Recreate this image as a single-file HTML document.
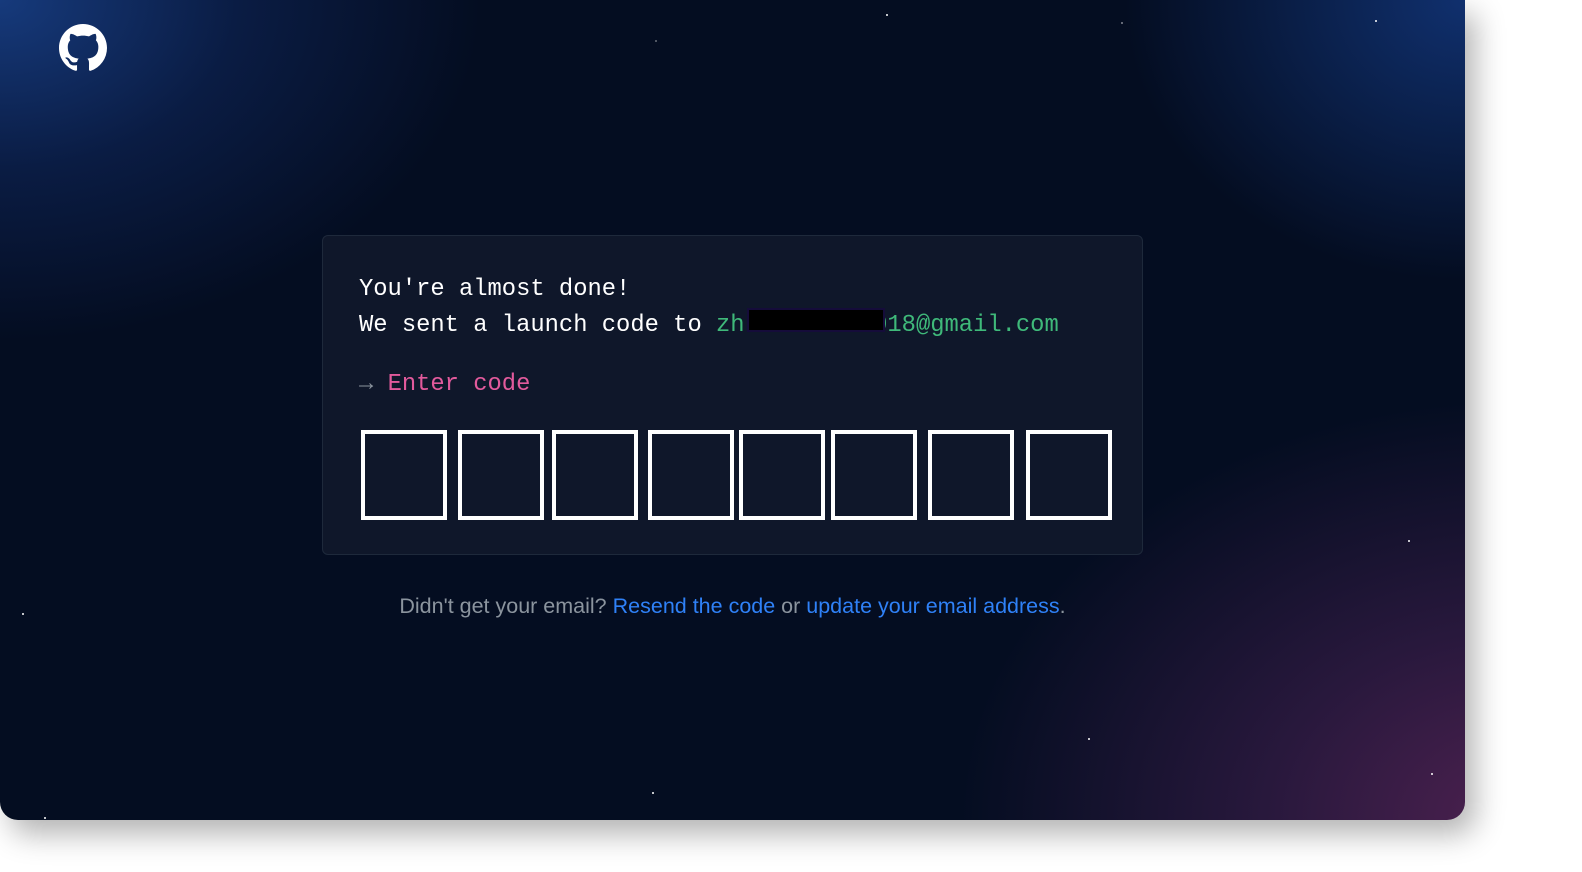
<!DOCTYPE html>
<html><head><style>
*{margin:0;padding:0;box-sizing:border-box}
body{width:1582px;height:872px;background:#fff;position:relative;overflow:hidden;font-family:"Liberation Sans",sans-serif}
.win{position:absolute;left:0;top:0;width:1465px;height:820px;border-radius:0 0 18px 18px;overflow:hidden;
background:
radial-gradient(ellipse 560px 420px at 1520px 820px,#4d2150 0%,rgba(60,30,75,.65) 45%,rgba(4,13,33,0) 100%),
radial-gradient(ellipse 480px 340px at 0px 0px,#163a7c 0%,rgba(15,40,95,.55) 50%,rgba(4,13,33,0) 100%),
radial-gradient(ellipse 340px 280px at 1465px 0px,#10306e 0%,rgba(4,13,33,0) 100%),
#040d21;
box-shadow:10px 14px 30px rgba(0,0,0,.3)}
.star{position:absolute;width:2px;height:2px;background:#fff;border-radius:1px}
.card{position:absolute;left:322px;top:235px;width:821px;height:320px;background:#0f172a;border:1px solid #1e293b;border-radius:6px}
.mono{font-family:"Liberation Mono",monospace;font-size:23.8px;position:absolute;left:36px;white-space:pre;color:#fff}
.box{position:absolute;top:194px;width:86px;height:90px;border:4px solid #fff}
.foot{position:absolute;top:594px;left:0;width:1465px;text-align:center;color:#8b949e;font-size:21.5px}
.foot a{color:#2f81f7;text-decoration:none}
</style></head><body>
<div class="win">
<svg style="position:absolute;left:59px;top:24px" width="48" height="48" viewBox="0 0 16 16"><path fill="#fff" d="M8 0C3.580 0 0 3.580 0 8c0 3.54 2.29 6.53 5.47 7.59.4.07.55-.17.55-.38 0-.19-.01-.82-.01-1.49-2.01.37-2.53-.49-2.69-.94-.09-.23-.48-.94-.82-1.13-.28-.15-.68-.52-.01-.53.63-.01 1.08.58 1.23.82.72 1.21 1.87.87 2.33.66.07-.52.28-.87.51-1.070-1.780-.2-3.640-.89-3.640-3.95 0-.87.31-1.59.82-2.15-.08-.2-.36-1.02.08-2.12 0 0 .67-.21 2.2.82.64-.18 1.32-.27 2-.27.68 0 1.36.09 2 .27 1.53-1.04 2.2-.82 2.2-.82.44 1.1.16 1.92.08 2.12.51.56.82 1.27.82 2.15 0 3.07-1.87 3.75-3.65 3.95.29.25.54.73.54 1.48 0 1.07-.01 1.93-.01 2.2 0 .21.15.46.55.38A8.013 8.013 0 0016 8c0-4.42-3.58-8-8-8z"/></svg>
<div class="star" style="left:886px;top:14px"></div>
<div class="star" style="left:1121px;top:22px;opacity:.5"></div>
<div class="star" style="left:1375px;top:20px"></div>
<div class="star" style="left:655px;top:40px;opacity:.4"></div>
<div class="star" style="left:1408px;top:540px"></div>
<div class="star" style="left:22px;top:613px"></div>
<div class="star" style="left:1088px;top:738px"></div>
<div class="star" style="left:1431px;top:773px"></div>
<div class="star" style="left:652px;top:792px"></div>
<div class="star" style="left:44px;top:817px"></div>
<div class="card">
<div class="mono" style="top:40px">You're almost done!</div>
<div class="mono" style="top:76px">We sent a launch code to <span style="color:#3fb97a">zh        2018@gmail.com</span></div>
<div style="position:absolute;left:424px;top:72px;width:138px;height:24px;background:#000;border:2px solid #150c3a"></div>
<div class="mono" style="top:135px"><span style="color:#8b949e">→</span> <span style="color:#e25a9c">Enter code</span></div>
<div class="box" style="left:38px"></div>
<div class="box" style="left:135px"></div>
<div class="box" style="left:229px"></div>
<div class="box" style="left:325px"></div>
<div class="box" style="left:416px"></div>
<div class="box" style="left:508px"></div>
<div class="box" style="left:605px"></div>
<div class="box" style="left:703px"></div>
</div>
<div class="foot">Didn't get your email? <a>Resend the code</a> or <a>update your email address</a>.</div>
</div>
</body></html>
